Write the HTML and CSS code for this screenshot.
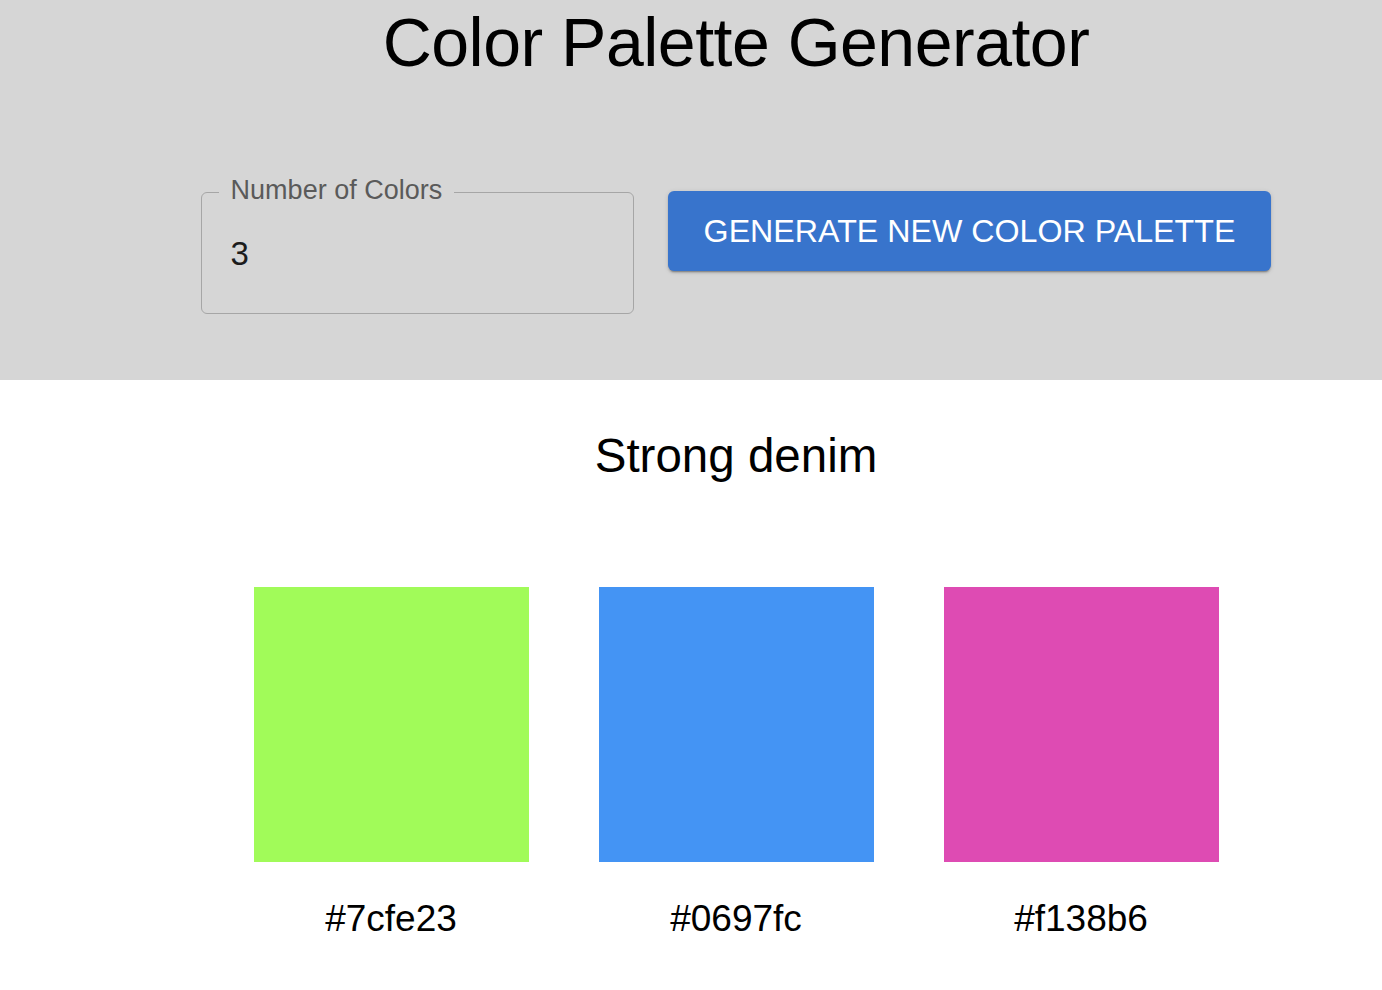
FILE: index.html
```html
<!DOCTYPE html>
<html lang="en">
<head>
<meta charset="utf-8">
<title>Color Palette Generator</title>
<link rel="stylesheet" href="styles.css">
</head>
<body>
<header class="top">
  <div class="inner">
    <h1 class="title">Color Palette Generator</h1>
    <div class="controls">
      <div class="field">
        <label class="field-label" for="count">Number of Colors</label>
        <input class="field-input" id="count" type="text" value="3">
      </div>
      <button class="gen" type="button">GENERATE NEW COLOR PALETTE</button>
    </div>
  </div>
</header>
<main class="palette">
  <h2 class="name">Strong denim</h2>
  <div class="swatches">
    <div class="swatch">
      <div class="chip chip-green"></div>
      <div class="hex">#7cfe23</div>
    </div>
    <div class="swatch">
      <div class="chip chip-blue"></div>
      <div class="hex">#0697fc</div>
    </div>
    <div class="swatch">
      <div class="chip chip-pink"></div>
      <div class="hex">#f138b6</div>
    </div>
  </div>
</main>
</body>
</html>
```
FILE: styles.css
```css
* { box-sizing: border-box; }

html, body {
  margin: 0;
  padding: 0;
  background: #ffffff;
  font-family: "Liberation Sans", Arial, Helvetica, sans-serif;
  color: #000;
}

.top {
  background: #d6d6d6;
  height: 380px;
}

.inner {
  padding-left: 90px;
  display: flex;
  flex-direction: column;
  align-items: center;
}

.title {
  margin: 8px 0 0;
  font-size: 68px;
  line-height: 68px;
  font-weight: 400;
  letter-spacing: -0.5px;
  color: #000;
}

.controls {
  margin-top: 115px;
  display: flex;
  align-items: flex-start;
  gap: 34px;
}

.field {
  position: relative;
  margin-top: 1px;
  width: 433px;
  height: 122px;
  border: 1px solid #a6a6a6;
  border-radius: 6px;
  display: flex;
  align-items: center;
  padding-left: 29px;
}

.field-label {
  position: absolute;
  top: -16px;
  left: 17px;
  padding: 0 12px;
  background: #d6d6d6;
  font-size: 27px;
  line-height: 26px;
  color: #5a5a5a;
}

.field-input {
  border: 0;
  outline: none;
  background: transparent;
  font-family: inherit;
  font-size: 33px;
  color: #1c1c1c;
  width: 100%;
  padding: 0;
  margin-top: 2px;
}

.gen {
  height: 80px;
  padding: 0 36px;
  border: 0;
  border-radius: 6px;
  background: #3874cc;
  color: #ffffff;
  font-family: inherit;
  font-size: 32.2px;
  font-weight: 400;
  letter-spacing: 0;
  box-shadow: 0 3px 1px -2px rgba(0,0,0,0.2), 0 2px 2px 0 rgba(0,0,0,0.14), 0 1px 5px 0 rgba(0,0,0,0.12);
  cursor: pointer;
}

.palette {
  padding-left: 90px;
  display: flex;
  flex-direction: column;
  align-items: center;
}

.name {
  margin: 52px 0 0;
  font-size: 47.5px;
  line-height: 47px;
  font-weight: 400;
}

.swatches {
  margin-top: 108px;
  display: grid;
  grid-template-columns: repeat(3, 345px);
  justify-items: center;
}

.swatch {
  display: flex;
  flex-direction: column;
  align-items: center;
}

.chip {
  width: 275px;
  height: 275px;
}

.chip-green { background: #a1fb59; }
.chip-blue { background: #4494f4; }
.chip-pink { background: #de4bb3; }

.hex {
  margin-top: 39px;
  font-size: 37px;
  line-height: 36px;
}
```
